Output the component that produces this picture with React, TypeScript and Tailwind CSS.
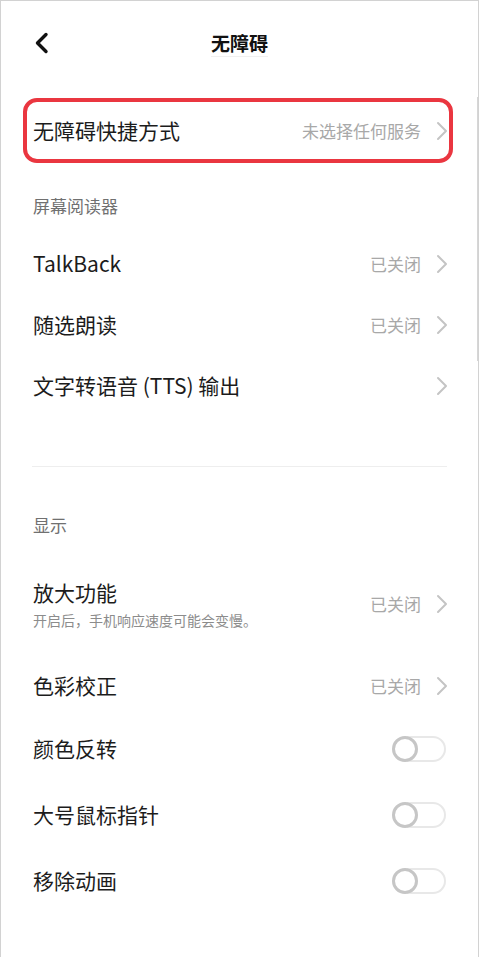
import React from 'react';

const font = { fontFamily: '"Noto Sans CJK SC", "Noto Sans", sans-serif' };

const Chevron = () => (
  <svg width="12" height="20" viewBox="0 0 12 20" className="shrink-0">
    <path d="M2 2l8 8-8 8" fill="none" stroke="#c4c4c4" strokeWidth="2" strokeLinecap="round" strokeLinejoin="round" />
  </svg>
);

const Toggle = () => (
  <div className="relative w-[54px] h-[26px] shrink-0">
    <div className="absolute left-[6px] right-0 top-0 bottom-0 rounded-full border-2 border-[#e8e8e8] bg-white" />
    <div className="absolute left-0 top-0 w-[26px] h-[26px] rounded-full border-[3px] border-[#c6c6c6] bg-white" />
  </div>
);

const SectionTitle = ({ text, className = '' }: { text: string; className?: string }) => (
  <div className={`h-[54px] flex items-center px-[32px] text-[17px] text-[#707070] ${className}`}>{text}</div>
);

const LinkRow = ({ label, value }: { label: string; value?: string }) => (
  <div className="h-[61px] flex items-center pl-[32px] pr-[30px]">
    <span className="flex-1 text-[21px] text-[#1c1c1c]">{label}</span>
    {value && <span className="text-[17px] text-[#a8a8a8] mr-[15px]">{value}</span>}
    <Chevron />
  </div>
);

const ToggleRow = ({ label }: { label: string }) => (
  <div className="h-[66px] flex items-center pl-[32px] pr-[32px]">
    <span className="flex-1 text-[21px] text-[#1c1c1c]">{label}</span>
    <Toggle />
  </div>
);

export default function App() {
  return (
    <div className="relative w-[479px] h-[957px] bg-white border-l border-t border-r border-[#d2d2d2] overflow-hidden" style={font}>
      <div className="absolute right-[-1px] top-[96px] w-[2px] h-[264px] bg-[#d6d6d6]" />

      <header className="relative h-[84px] flex items-center justify-center">
        <div className="absolute left-[33px] top-[31px]">
          <svg width="16" height="22" viewBox="0 0 16 22">
            <path d="M12 2.5L3.5 11 12 19.5" fill="none" stroke="#111" strokeWidth="3.4" strokeLinecap="round" strokeLinejoin="round" />
          </svg>
        </div>
        <h1 className="text-[19px] font-bold text-[#111] border-b border-[#f0f0f0] leading-[26px]">无障碍</h1>
      </header>

      <div className="mt-[13px] ml-[22px] w-[430px] h-[65px] rounded-[14px] border-[4px] border-[#ea3640] flex items-center pl-[6px] pr-[1px]">
        <span className="flex-1 text-[21px] text-[#1c1c1c]">无障碍快捷方式</span>
        <span className="text-[17px] text-[#a8a8a8] mr-[15px]">未选择任何服务</span>
        <Chevron />
      </div>

      <SectionTitle text="屏幕阅读器" className="mt-[16px]" />
      <LinkRow label="TalkBack" value="已关闭" />
      <LinkRow label="随选朗读" value="已关闭" />
      <LinkRow label="文字转语音 (TTS) 输出" />

      <div className="mt-[50px] mx-[31px] h-px bg-[#eeeeee]" />

      <SectionTitle text="显示" className="mt-[31px]" />

      <div className="h-[103px] flex items-center pl-[32px] pr-[30px]">
        <div className="flex-1 flex flex-col gap-[4px]">
          <span className="text-[21px] leading-[28px] text-[#1c1c1c]">放大功能</span>
          <span className="text-[14px] leading-[20px] text-[#8c8c8c]">开启后，手机响应速度可能会变慢。</span>
        </div>
        <span className="text-[17px] text-[#a8a8a8] mr-[15px]">已关闭</span>
        <Chevron />
      </div>
      <LinkRow label="色彩校正" value="已关闭" />
      <ToggleRow label="颜色反转" />
      <ToggleRow label="大号鼠标指针" />
      <ToggleRow label="移除动画" />
    </div>
  );
}
